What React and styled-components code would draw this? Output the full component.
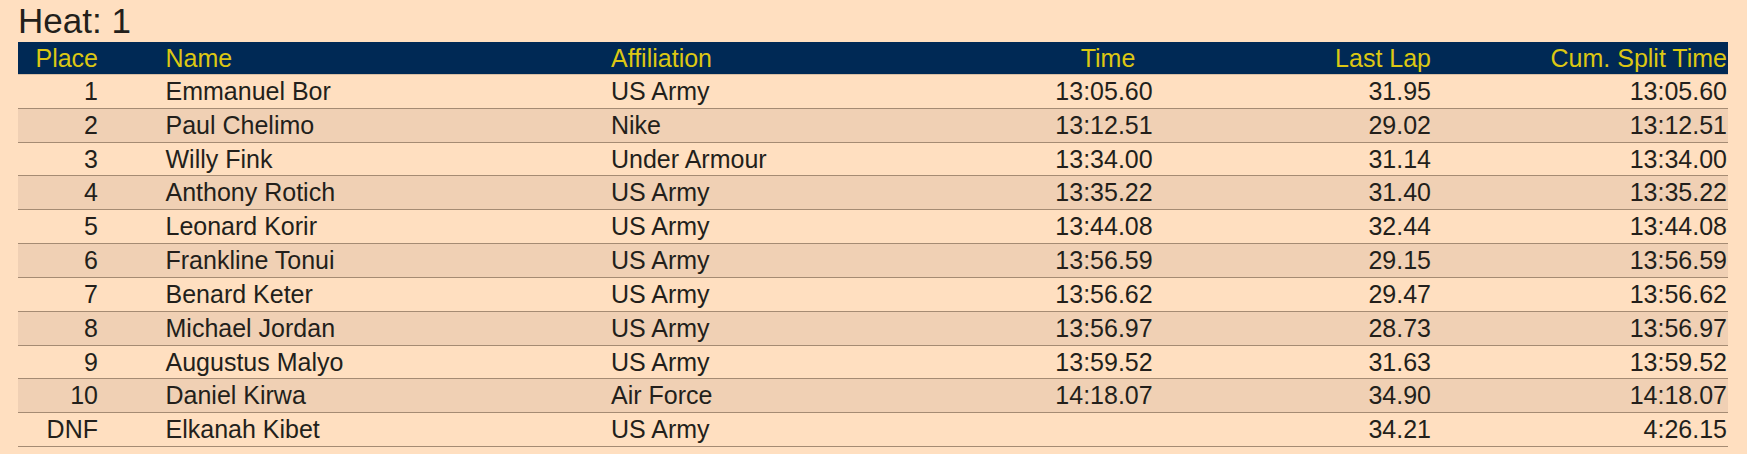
import React from "react";
import styled, { createGlobalStyle } from "styled-components";

const GlobalStyle = createGlobalStyle`
  html, body {
    margin: 0;
    padding: 0;
    background: #ffdfc0;
  }
  body {
    font-family: "Liberation Sans", Arial, sans-serif;
    color: #231f1b;
  }
`;

const Page = styled.div`
  padding: 1px 19px 0 18px;
`;

const Heading = styled.h2`
  margin: 0 0 1px 0;
  font-size: 35px;
  font-weight: normal;
  line-height: 40px;
  color: #231f1b;
`;

const Table = styled.div`
  display: grid;
  grid-template-columns: 100px 493px 407px 172px 241px 297px;
  font-size: 25px;
`;

const HeaderRow = styled.div`
  display: contents;
`;

const HeaderCell = styled.div`
  background: #002955;
  color: #dcc713;
  line-height: 32px;
  height: 32px;
  border-bottom: 1px solid #d9bfa5;
  text-align: ${(p) => p.$align};
  padding-left: ${(p) => p.$padL}px;
  padding-right: ${(p) => p.$padR}px;
  white-space: nowrap;
`;

const Cell = styled.div`
  background: ${(p) => (p.$alt ? "#f0d0b4" : "transparent")};
  line-height: 32.84px;
  height: 32.84px;
  border-bottom: 1px solid #a58b73;
  text-align: ${(p) => p.$align};
  padding-left: ${(p) => p.$padL}px;
  padding-right: ${(p) => p.$padR}px;
  white-space: nowrap;
`;

const columns = [
  { key: "place", label: "Place", align: "right", padL: 0, padR: 20 },
  { key: "name", label: "Name", align: "left", padL: 47.5, padR: 0 },
  { key: "aff", label: "Affiliation", align: "left", padL: 0, padR: 0 },
  { key: "time", label: "Time", align: "center", padL: 0, padR: 0, headPadL: 8 },
  { key: "lap", label: "Last Lap", align: "right", padL: 0, padR: 0 },
  { key: "cum", label: "Cum. Split Time", align: "right", padL: 0, padR: 1 },
];

const rows = [
  ["1", "Emmanuel Bor", "US Army", "13:05.60", "31.95", "13:05.60"],
  ["2", "Paul Chelimo", "Nike", "13:12.51", "29.02", "13:12.51"],
  ["3", "Willy Fink", "Under Armour", "13:34.00", "31.14", "13:34.00"],
  ["4", "Anthony Rotich", "US Army", "13:35.22", "31.40", "13:35.22"],
  ["5", "Leonard Korir", "US Army", "13:44.08", "32.44", "13:44.08"],
  ["6", "Frankline Tonui", "US Army", "13:56.59", "29.15", "13:56.59"],
  ["7", "Benard Keter", "US Army", "13:56.62", "29.47", "13:56.62"],
  ["8", "Michael Jordan", "US Army", "13:56.97", "28.73", "13:56.97"],
  ["9", "Augustus Malyo", "US Army", "13:59.52", "31.63", "13:59.52"],
  ["10", "Daniel Kirwa", "Air Force", "14:18.07", "34.90", "14:18.07"],
  ["DNF", "Elkanah Kibet", "US Army", "", "34.21", "4:26.15"],
];

export default function App() {
  return (
    <>
      <GlobalStyle />
      <Page>
        <Heading>Heat: 1</Heading>
        <Table>
          <HeaderRow>
            {columns.map((c) => (
              <HeaderCell
                key={c.key}
                $align={c.align}
                $padL={c.headPadL ?? c.padL}
                $padR={c.padR}
              >
                {c.label}
              </HeaderCell>
            ))}
          </HeaderRow>
          {rows.map((r, i) =>
            r.map((v, j) => (
              <Cell
                key={`${i}-${j}`}
                $alt={i % 2 === 1}
                $align={columns[j].align}
                $padL={columns[j].padL}
                $padR={columns[j].padR}
              >
                {v}
              </Cell>
            ))
          )}
        </Table>
      </Page>
    </>
  );
}
